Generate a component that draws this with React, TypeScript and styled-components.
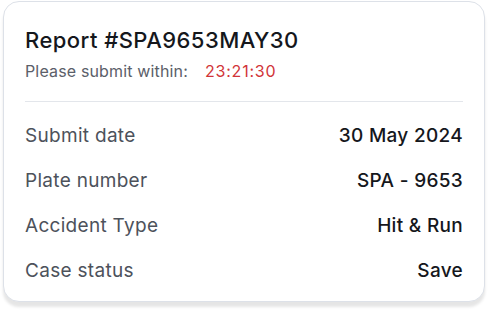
import React, { FC } from "react";
import styled, { createGlobalStyle } from "styled-components";

const GlobalStyle = createGlobalStyle`
  body {
    margin: 0;
    background: #ffffff;
    font-family: Inter, "Noto Sans", "Liberation Sans", sans-serif;
  }
`;

const Page = styled.div`
  padding: 1px 4px 12px 3px;
`;

const Card = styled.div`
  background: #fff;
  border: 1px solid #dde1e8;
  border-radius: 16px;
  box-shadow: 0 5px 3px rgba(0, 0, 0, 0.1);
  padding: 24px 21px 8px 21px;
  height: 301px;
  box-sizing: border-box;
`;

const Title = styled.h1`
  margin: 0;
  font-size: 22px;
  line-height: 28px;
  font-weight: 500;
  letter-spacing: 0.45px;
  color: #15171c;
`;

const Deadline = styled.div`
  display: flex;
  align-items: center;
  gap: 17px;
  margin-top: 7px;
  font-size: 16px;
  line-height: 20px;
  letter-spacing: 0.15px;
  color: #5b6069;
`;

const Timer = styled.span`
  color: #d13438;
  letter-spacing: 0.8px;
`;

const Divider = styled.hr`
  border: none;
  border-top: 1px solid #e3e6eb;
  margin: 20px 0 11px;
`;

const Row = styled.div`
  display: flex;
  align-items: center;
  justify-content: space-between;
  height: 45px;
`;

const Label = styled.span`
  font-size: 19px;
  letter-spacing: 0.3px;
  color: #4d525b;
`;

const Value = styled.span`
  font-size: 19px;
  font-weight: 500;
  letter-spacing: 0.3px;
  color: #15171c;
`;

interface Field {
  label: string;
  value: string;
}

const fields: Field[] = [
  { label: "Submit date", value: "30 May 2024" },
  { label: "Plate number", value: "SPA - 9653" },
  { label: "Accident Type", value: "Hit & Run" },
  { label: "Case status", value: "Save" },
];

const App: FC = () => {
  return (
    <>
      <GlobalStyle />
      <Page>
        <Card>
          <Title>Report #SPA9653MAY30</Title>
          <Deadline>
            Please submit within:
            <Timer>23:21:30</Timer>
          </Deadline>
          <Divider />
          {fields.map((f) => (
            <Row key={f.label}>
              <Label>{f.label}</Label>
              <Value>{f.value}</Value>
            </Row>
          ))}
        </Card>
      </Page>
    </>
  );
};

export default App;
